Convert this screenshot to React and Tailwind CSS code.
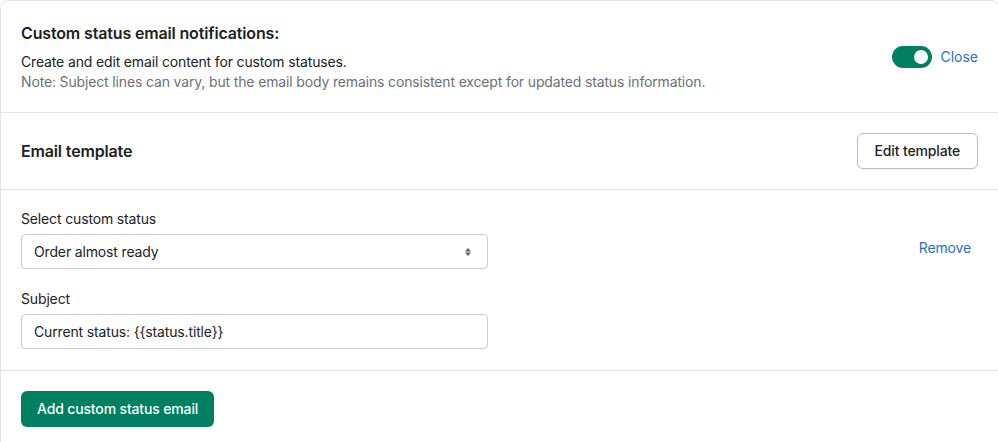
export default function App() {
  return (
    <div className="w-[998px] h-[442px] overflow-hidden bg-white" style={{ fontFamily: 'Inter, "Noto Sans", sans-serif' }}>
      <div className="w-[1000px] border border-[#e1e3e5] rounded-t-[10px] text-[#202223] tracking-[-0.15px]">
        {/* Section 1 */}
        <div className="flex items-center justify-between p-5 border-b border-[#e1e3e5]">
          <div>
            <div className="text-base leading-6 font-semibold">Custom status email notifications:</div>
            <div className="text-sm leading-5 mt-[7px]">Create and edit email content for custom statuses.</div>
            <div className="text-sm leading-5 text-[#6d7175]">Note: Subject lines can vary, but the email body remains consistent except for updated status information.</div>
          </div>
          <div className="flex items-center gap-2 mr-[1px]">
            <div className="w-10 h-[22px] rounded-full bg-[#008060] flex items-center justify-end pr-[4px]">
              <div className="w-[14px] h-[14px] rounded-full bg-white" />
            </div>
            <span className="text-sm leading-5 text-[#2c6ecb] tracking-normal">Close</span>
          </div>
        </div>
        {/* Section 2 */}
        <div className="flex items-center justify-between px-5 py-5 pr-[21px] border-b border-[#e1e3e5]">
          <div className="text-base leading-6 font-semibold">Email template</div>
          <button className="h-[36px] px-[17px] text-sm font-medium rounded-md border border-[#babfc3] bg-white text-[#202223] shadow-[0_1px_0_rgba(0,0,0,0.05)]">Edit template</button>
        </div>
        {/* Section 3 */}
        <div className="flex items-start pl-5 pr-[28px] pt-[19px] pb-[21px] border-b border-[#e1e3e5]">
          <div className="w-[467px]">
            <div className="text-sm leading-5">Select custom status</div>
            <div className="mt-[5px] h-[35px] flex items-center justify-between rounded-[4px] border border-[#c9cccf] pl-3 pr-[15px]">
              <span className="text-sm">Order almost ready</span>
              <svg width="8" height="12" viewBox="0 0 8 12">
                <path d="M4 2 L7 5.5 H1 Z" fill="#5c5f62" />
                <path d="M4 10 L7 6.5 H1 Z" fill="#5c5f62" />
              </svg>
            </div>
            <div className="text-sm leading-5 mt-5">Subject</div>
            <div className="mt-[5px] h-[35px] flex items-center rounded-[4px] border border-[#c9cccf] pl-3">
              <span className="text-sm">Current status: {'{{status.title}}'}</span>
            </div>
          </div>
          <div className="ml-auto mt-[29px] text-sm leading-5 text-[#2c6ecb]">Remove</div>
        </div>
        {/* Section 4 */}
        <div className="px-5 pt-5 pb-10">
          <button className="h-[36px] px-4 rounded-md bg-[#008060] text-white text-sm font-medium">Add custom status email</button>
        </div>
      </div>
    </div>
  );
}
